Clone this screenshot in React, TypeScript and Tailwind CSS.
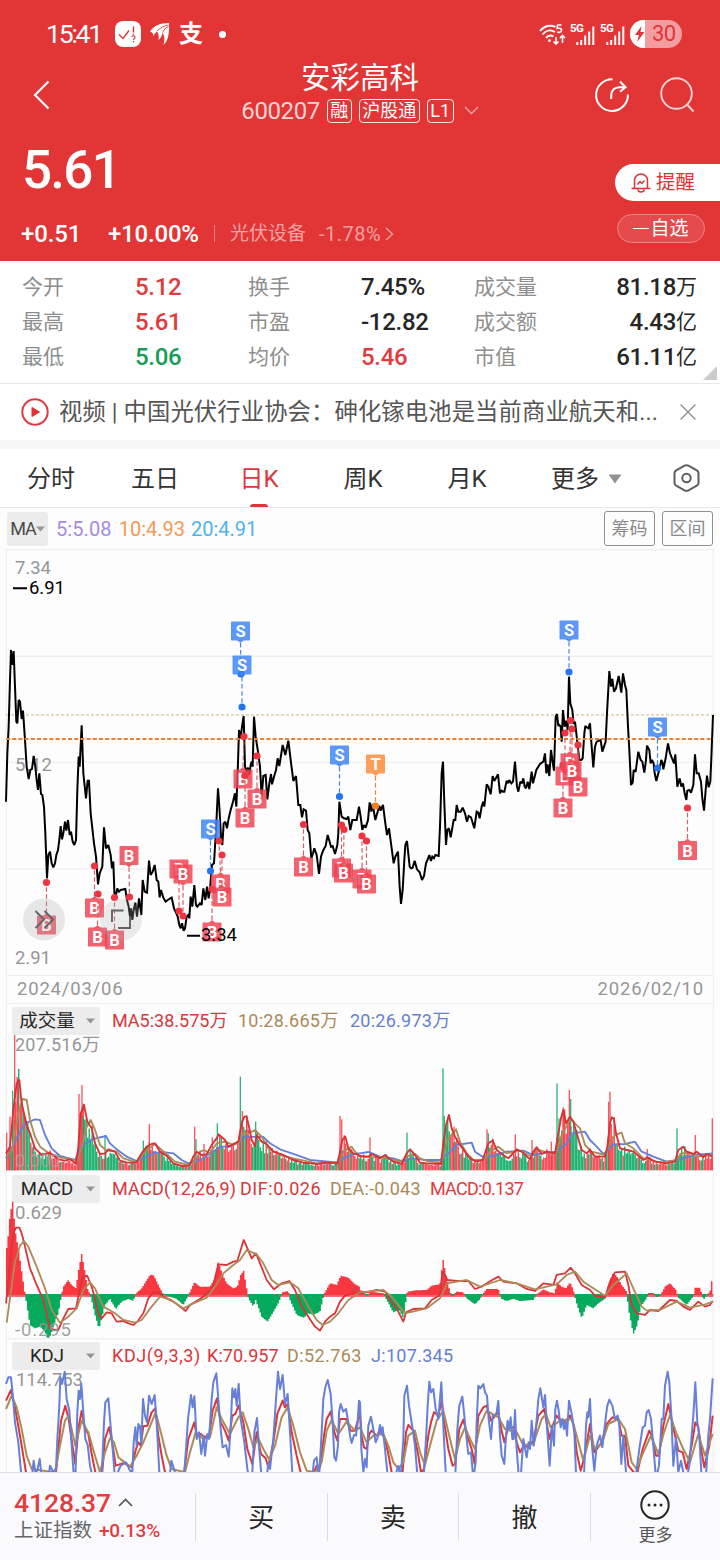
import React from "react";

type Point = [number, number];

// Chart coordinates use three units per CSS pixel, measured from the page origin.
const parse = (text: string, dx: number, dy: number): Point[] =>
  text
    .trim()
    .split(/\s+/)
    .map((pair) => {
      const [x, y] = pair.split(",").map(Number);
      return [x + dx, y + dy] as Point;
    });

const join = (points: Point[]) => points.map((p) => p.join(",")).join(" ");

const sample = (points: Point[], x: number) => {
  for (let i = 1; i < points.length; i++) {
    if (points[i][0] >= x) {
      const [x0, y0] = points[i - 1];
      const [x1, y1] = points[i];
      return y0 + ((y1 - y0) * (x - x0)) / (x1 - x0 || 1);
    }
  }
  return points[points.length - 1][1];
};

const noise = (n: number) => {
  const v = Math.sin(n * 127.1 + 11.7) * 43758.5453;
  return v - Math.floor(v);
};

const price: Point[] = [
  ...parse(
    `18,785 22,640 26,560 30,420 33,330 37,375 41,333 45,440 49,545 52,550 56,480 60,485 65,537 69,512 75,600 80,680 86,717 91,690 96,687 101,648 106,680 110,720 114,750 118,700 123,762 127,765 132,800 136,880 141,1015 145,945 150,935 155,970 160,982 165,970 169,945 174,930 178,900 182,858 186,898 190,880 195,845 199,872 204,840 209,885 213,875 218,905 223,915 228,900 232,750 236,650 239,680 245,556 250,700 258,775 263,722 267,722 272,820 282,910 288,950 294,1033 299,1000 307,980 312,862 318,925 325,915 332,945 336,985 340,965 344,1080 348,1065 352,1045 357,1055 362,1050 376,1047 381,1080 386,1100 390,1130 393,1105 397,1140 401,1110 406,1088 411,1130 417,1075 424,1125 428,1020 434,1055 441,1058 447,962 452,1005 458,995 464,975 470,1020 475,1025 479,1072 483,1050 490,1073 497,1085 503,1080 515,1073 522,1105 528,1118 533,1130 538,1155 542,1165 546,1150 551,1172 555,1165 560,1130 565,1125 568,1135 572,1070 577,1100 583,1035 588,1095 592,1100 600,1090 605,1095 610,1045 616,1080 621,1040 626,1075 630,1050 633,1010 636,975 642,970 648,870 654,745 658,800 663,890 667,915 671,850 676,845 681,865 686,835 692,810 699,785 705,760 709,800 713,700`,
    0,
    1620
  ),
  ...parse(
    `177,390 182,415 186,380 191,348 195,500 200,515 204,503 208,525 212,495 215,485 218,500 222,350 227,410 234,455 240,500 245,590 250,528 257,525 262,598 268,550 273,522 276,553 282,530 288,510 293,475 298,498 308,435 316,465 325,422 332,480 340,543 348,528 355,615 361,615 366,652 371,628 378,632 383,690 388,700 394,775 399,760 403,745 410,765 417,822 423,770 428,755 433,745 437,738 443,705 448,722 453,740 458,738 465,762 472,735 475,700 478,605 485,650 492,655 500,657 505,650 511,690 517,660 530,660 537,620 542,650 547,690 552,675 557,683 564,660 569,607 574,635 578,612 586,660 593,635 598,617 602,632 609,615 616,670 621,705 627,685 633,730 641,790 646,770 654,755 659,860 663,912 668,870 673,780 676,735 681,723 689,800 693,805 698,803 704,782 711,808 719,817 726,840 732,828 738,790 743,778 748,765 753,783 757,770 762,775 766,765 776,768 780,680 785,520`,
    540,
    1800
  ),
  ...parse(
    `9,485 13,610 18,735 22,690 27,685 32,712 41,660 46,660 50,615 55,635 62,635 68,623 75,640 81,665 86,648 93,652 103,685 110,635 115,638 119,655 125,620 130,605 133,620 140,553 145,560 152,583 158,528 163,543 174,523 180,580 185,572 189,575 193,575 200,542 205,550 208,540 214,550 219,545 225,485 231,560 235,575 241,545 246,550 250,535 254,560 258,565 263,545 268,567 275,515 279,550 289,510 300,492 310,485 315,460 319,520 323,493 328,528 333,450 337,480 342,512 347,350 351,342 355,378 358,375 362,380 365,425 369,330 374,380 379,362 383,390 387,230 391,310 397,330 401,372 405,365 409,400 418,480 424,480 428,475 433,400 436,378 440,382 445,385 450,370 455,440 460,502 465,440 470,425 482,420 487,455 493,437 497,425 501,340 508,213 513,260 517,237 522,275 528,265 536,228 544,278 549,220 555,255 559,270 564,380 568,450 573,555 578,548 581,510 587,515 595,455 602,480 607,485 613,518 618,480 621,437 628,450 632,490 636,480 641,490 644,520 649,543 655,520 660,500 664,480 668,490 670,508 677,475 684,430 690,460 698,480 702,490 706,463 712,560 719,535 724,560 729,550 734,580 739,600 742,572 748,570 753,578 760,555 765,463 770,520 776,520 783,545 787,595 792,632 797,570 801,527 806,562 811,545 815,450 819,345`,
    1320,
    1800
  ),
];

const volMa5: Point[] = [
  ...parse(
    `18,460 30,440 40,330 50,250 58,240 65,310 80,375 90,400 105,445 125,465 150,458 175,478 195,482 210,478 228,492 235,440 242,340 252,315 262,365 275,385 285,430 300,462 315,460 325,448 345,455 360,482 380,488 408,488 425,460 440,440 455,432 465,430 480,455 500,468 520,490 545,498 568,497 580,470 590,455 605,465 620,463 635,435 650,415 656,403 675,420 685,440 705,430 715,425 725,370 733,350 740,350 748,385 755,420 765,438 770,405 785,425 800,432 820,455 850,465 880,480 910,488 950,492 975,488 1012,490 1018,465 1027,420 1036,410 1045,445 1060,460 1075,465`,
    0,
    3000
  ),
  ...parse(
    `0,468 25,470 35,462 60,475 75,465 100,485 125,492 140,460 150,448 165,465 180,488 200,490 243,492 250,430 258,375 267,345 275,385 285,410 300,435 315,455 330,475 350,485 368,480 378,450 385,430 398,422 410,450 425,462 445,475 470,448 485,455 510,478 520,455 530,442 545,462 560,455 585,460 595,400 603,355 610,330 618,370 630,350 640,365 650,400 665,450 680,460 690,450 705,470 735,470 742,440 750,370 755,352 762,358 768,400 780,445 800,450 820,455 850,480 862,472 885,485 920,490 945,485 955,450 970,440 980,455 1000,462 1010,455 1030,472 1040,462 1058,470`,
    1080,
    3000
  ),
];

const volMa10: Point[] = [
  ...parse(
    `18,470 35,455 55,340 68,297 80,300 90,360 105,410 120,440 150,462 180,472 215,478 232,485 245,440 260,380 272,360 285,390 300,435 320,452 350,455 370,475 410,487 435,455 465,432 485,450 500,462 525,485 565,495 585,485 600,455 612,450 630,460 650,430 675,425 700,435 715,428 730,400 745,400 765,390 785,410 805,445 840,465 880,475 950,490 1015,487 1030,455 1055,440 1065,455`,
    0,
    3000
  ),
  ...parse(
    `0,470 70,473 120,485 150,465 165,462 180,475 205,485 245,487 262,420 288,388 300,425 320,460 340,480 370,480 390,455 415,440 440,460 480,452 510,468 535,450 565,458 588,460 605,405 632,355 645,370 660,385 675,435 695,455 735,465 750,430 765,405 785,398 795,430 820,445 850,475 900,487 945,482 965,460 990,458 1010,470 1058,465`,
    1080,
    3000
  ),
];

const volMa20: Point[] = [
  ...parse(
    `18,475 35,450 50,415 75,370 105,358 120,360 135,405 155,445 180,468 225,480 245,440 275,418 318,408 330,430 350,448 380,470 410,483 440,470 465,458 495,457 520,460 545,480 565,490 600,480 630,462 660,440 690,440 715,425 735,410 790,411 810,430 840,448 880,462 930,480 1010,487 1040,470 1070,460`,
    0,
    3000
  ),
  ...parse(
    `0,460 25,456 60,470 100,475 130,485 150,475 200,480 240,480 265,460 290,435 335,428 345,455 370,472 410,465 440,455 490,452 520,465 560,458 590,455 620,430 635,400 675,395 690,420 710,440 730,462 745,450 760,433 795,432 825,425 845,455 880,470 920,485 960,478 1000,465 1058,460`,
    1080,
    3000
  ),
];

const RED = "#f93a46";
const GREEN = "#08aa63";

const spikes: [number, number, string][] = [
  [20, 398, RED], [30, 350, RED], [38, 272, GREEN], [44, 105, RED], [54, 240, RED], [237, 282, RED], [246, 255, RED],
  [250, 350, GREEN], [315, 405, GREEN], [430, 422, GREEN], [448, 372, RED], [584, 380, RED], [588, 418, GREEN],
  [612, 432, RED], [637, 412, RED], [652, 370, GREEN], [721, 230, GREEN], [727, 333, RED], [740, 345, RED],
  [767, 365, GREEN], [1020, 348, RED], [1025, 358, RED], [1110, 412, RED], [1221, 398, GREEN], [1329, 205, GREEN],
  [1333, 348, GREEN], [1362, 380, RED], [1461, 388, RED], [1465, 400, GREEN], [1546, 403, RED], [1596, 420, RED],
  [1654, 425, RED], [1671, 250, GREEN], [1677, 355, GREEN], [1690, 322, RED], [1708, 270, RED], [1712, 297, GREEN],
  [1826, 305, RED], [1830, 275, RED], [1942, 447, RED], [2031, 385, GREEN], [2086, 405, RED], [2137, 355, RED],
];

// Stretches of trading days in which falling days dominate.
const greenRuns: Point[] = [
  [68, 92], [100, 150], [250, 295], [318, 350], [470, 560], [755, 790], [870, 950], [1080, 1120], [1150, 1200],
  [1225, 1275], [1333, 1350], [1380, 1410], [1490, 1540], [1560, 1595], [1712, 1755], [1850, 1940], [2010, 2060],
];

const volumeBars = Array.from({ length: 471 }, (_, i) => {
  const x = 20 + i * 4.5;
  const height = (3511 - sample(volMa5, x)) * (0.62 + noise(i) * 0.52);
  const falling = greenRuns.some(([a, b]) => x > a && x < b);
  const color = noise(i + 900) < (falling ? 0.85 : 0.3) ? GREEN : RED;
  return { x, y: 3511 - height, color };
});

const histogram: Point[] = [
  ...parse(
    `18,235 25,180 30,120 38,80 46,170 58,240 68,310 75,357 78,375 90,450 105,460 120,455 135,470 143,492 152,480 165,440 175,415 182,375 185,357 190,335 205,315 215,330 228,340 235,290 245,237 255,290 262,340 270,358 275,375 285,420 297,462 305,430 315,390 330,372 347,402 365,380 385,372 400,378 408,355 425,340 450,300 462,302 475,330 490,358 500,362 530,372 550,390 565,362 570,350 583,322 600,335 630,335 645,310 655,260 668,300 680,325 700,340 712,335 722,300 731,287 740,340 745,370 760,395 767,375 785,425 802,440 815,420 835,385 848,352 865,348 870,375 890,420 912,428 925,415 940,420 960,410 972,358 990,325 1010,330 1022,302 1045,308 1062,325 1078,335`,
    0,
    3525
  ),
  ...parse(
    `0,345 12,350 15,360 22,365 30,350 70,355 80,375 100,412 118,405 130,430 138,375 142,350 165,346 200,345 215,332 240,328 249,252 258,300 270,350 278,366 288,350 310,352 320,370 345,388 360,372 368,358 380,342 415,342 425,372 440,378 460,372 480,378 520,375 528,360 550,343 570,352 585,355 590,320 605,335 618,340 630,322 640,345 648,380 665,430 680,390 700,400 715,385 735,372 742,340 760,292 775,310 785,330 800,350 805,400 820,478 832,450 842,395 860,370 865,354 880,354 890,368 902,360 915,335 930,325 948,345 955,368 980,390 1000,365 1005,338 1020,338 1030,375 1042,360 1050,350 1058,300`,
    1080,
    3525
  ),
];

const ZERO = 3885;
const stepped = (clampTo: (y: number) => number) =>
  `M18 ${ZERO}` +
  Array.from({ length: 471 }, (_, i) => {
    const x = 20 + i * 4.5;
    return `V${clampTo(sample(histogram, x)).toFixed(1)}H${x + 2.3}`;
  }).join("") +
  `V${ZERO}Z`;
const risingArea = stepped((y) => Math.min(y, ZERO));
const fallingArea = stepped((y) => Math.max(y, ZERO));

const dif: Point[] = [
  ...parse(
    `18,385 25,320 32,240 40,175 48,158 58,158 65,175 75,215 90,280 110,330 130,375 143,430 150,460 165,465 175,465 190,430 205,402 228,400 238,350 248,305 262,303 275,335 285,370 295,415 305,430 320,412 335,415 350,440 370,438 385,445 400,450 412,440 430,415 445,370 460,352 475,352 490,365 520,380 540,395 557,408 570,390 600,372 635,345 645,310 655,268 680,270 700,260 712,258 722,225 731,195 740,215 755,250 768,235 778,260 800,315 822,343 845,325 868,318 885,345 905,395 925,425 945,455 960,467 975,440 990,425 1005,415 1020,380 1035,362 1060,355`,
    0,
    3525
  ),
  ...parse(
    `0,355 20,352 50,345 75,350 90,375 110,400 130,440 138,412 160,402 195,400 215,375 240,360 245,310 250,290 262,315 290,318 325,318 345,342 365,335 385,322 415,305 430,320 470,325 500,342 525,348 550,325 580,330 590,300 615,295 632,278 645,295 665,330 690,345 705,362 735,368 750,320 765,292 795,290 805,330 815,390 830,415 855,420 870,405 895,408 930,375 950,378 970,395 990,405 1015,380 1035,395 1050,390 1058,378`,
    1080,
    3525
  ),
];

const dea: Point[] = [
  ...parse(
    `20,443 30,370 45,260 60,212 72,198 85,215 110,275 135,340 155,405 180,443 205,425 230,400 250,345 270,322 285,340 310,395 345,415 370,435 405,443 425,435 455,395 480,365 510,373 550,400 580,385 620,368 645,335 670,295 700,270 720,255 740,225 770,238 790,265 815,315 835,330 870,322 895,340 925,395 950,435 968,450 990,440 1015,415 1045,375`,
    0,
    3525
  ),
  ...parse(
    `0,352 70,345 95,365 135,415 200,400 240,370 262,325 320,315 360,335 420,315 470,325 525,343 590,328 620,300 645,290 670,320 735,362 760,330 800,295 820,340 845,395 860,407 900,405 950,380 990,398 1030,390 1058,380`,
    1080,
    3525
  ),
];

const lineJ: Point[] = [
  ...parse(
    `18,135 25,115 33,115 38,165 45,250 55,310 65,420 95,420 101,365 106,400 112,395 119,360 126,420 145,420 150,380 160,400 168,390 172,300 178,200 181,115 186,135 194,98 200,180 208,215 215,320 222,420 226,420 232,220 236,155 240,180 244,135 250,220 256,300 263,318 270,380 280,420 305,420 312,250 316,190 325,178 330,240 338,330 345,420 362,380 378,370 390,395 397,400 401,310 406,265 410,320 415,255 420,262 424,315 429,180 435,230 441,250 447,170 455,195 464,168 470,250 478,400 485,420 508,420 514,365 525,400 550,440 558,330 564,240 573,168 578,205 583,172 590,300 597,280 604,345 611,290 615,350 622,285 627,300 635,180 640,130 649,103 655,180 662,270 668,325 678,318 686,353 692,270 697,148 702,175 706,150 710,200 716,135 722,240 733,310 742,390 748,420 756,420 763,280 771,237 776,310 783,395 790,430 800,420 805,370 810,390 820,300 828,180 834,98 840,150 848,108 855,195 863,165 870,280 878,420 935,430 942,365 950,355 957,420 965,280 970,180 976,145 983,123 992,165 998,250 1003,355 1008,365 1014,320 1017,220 1022,195 1030,218 1038,210 1044,245 1050,290 1055,312 1062,288 1068,290 1073,250 1077,185`,
    0,
    4020
  ),
  ...parse(
    `0,190 4,330 10,400 15,360 20,385 25,260 33,233 38,260 47,310 53,295 60,258 65,285 68,265 75,330 82,400 100,430 115,380 122,420 130,300 133,170 141,140 147,200 158,270 165,320 173,420 190,430 198,300 203,200 208,128 213,160 220,150 227,210 235,240 244,130 250,260 258,420 285,430 292,270 298,200 307,173 313,230 320,300 325,345 333,340 340,420 347,370 350,250 355,140 361,148 370,135 375,160 381,170 386,240 393,300 398,230 405,230 410,220 415,185 420,290 425,350 433,375 438,290 443,245 448,270 452,235 457,300 461,300 465,213 470,330 477,420 482,420 490,300 500,355 506,310 510,330 515,245 521,320 527,280 535,180 541,148 550,205 555,168 562,280 569,380 576,260 582,320 586,210 591,185 596,215 602,265 607,240 612,270 617,250 621,290 627,185 636,230 643,280 648,400 660,430 672,410 678,260 682,220 685,235 690,180 696,320 703,395 710,320 720,290 727,325 738,230 742,200 748,182 757,200 765,240 773,230 778,260 784,375 790,290 798,400 810,430 825,430 838,330 848,265 855,260 860,220 866,213 873,240 880,320 888,420 897,380 905,240 910,240 915,140 923,98 928,130 934,230 940,380 948,295 955,400 963,365 970,400 978,430 988,380 995,290 1000,230 1006,130 1012,250 1018,290 1025,420 1038,410 1045,290 1050,240 1054,180 1058,118`,
    1080,
    4020
  ),
];

const lineK: Point[] = [
  ...parse(
    `18,185 33,153 45,205 60,290 78,400 90,430 165,430 175,330 183,245 196,200 206,240 216,310 226,375 235,270 245,215 255,270 265,285 275,345 288,410 305,420 315,300 327,265 335,300 347,380 372,372 395,385 408,330 415,310 422,320 430,262 442,260 455,220 466,208 475,290 485,350 495,400 550,420 565,300 583,250 590,290 602,285 615,295 628,285 638,215 651,178 662,250 675,275 686,305 697,230 706,225 716,200 730,250 742,330 757,375 770,280 783,345 797,358 805,385 820,310 832,225 848,185 855,205 863,195 875,280 890,350 902,400 930,430 950,380 960,385 972,290 980,240 992,218 1003,280 1012,305 1020,240 1038,240 1052,275 1065,275 1080,220`,
    0,
    4020
  ),
  ...parse(
    `5,290 12,325 20,330 28,285 35,275 50,290 62,275 75,300 85,345 95,400 125,430 138,280 145,258 160,275 175,350 183,400 192,390 205,290 213,250 222,220 235,230 245,185 255,265 265,330 278,380 285,375 298,270 310,242 325,300 335,330 344,375 355,230 370,205 380,200 393,245 415,220 425,275 433,310 445,265 460,265 470,310 480,340 492,320 505,325 520,305 535,230 553,210 568,300 578,260 590,230 610,255 630,230 642,260 650,340 662,395 672,360 685,285 690,255 703,340 725,310 740,255 757,235 775,240 785,290 795,290 805,380 830,410 848,330 868,275 875,290 888,350 897,350 910,260 925,195 935,240 945,290 955,335 968,340 980,390 995,320 1006,250 1015,265 1025,340 1033,385 1048,320 1058,230`,
    1080,
    4020
  ),
];

const lineD: Point[] = [
  ...parse(
    `18,210 35,170 50,205 65,270 80,350 95,390 130,395 165,400 180,320 195,245 206,230 226,320 245,245 265,280 285,350 300,400 315,340 330,298 342,310 355,355 390,383 410,350 430,310 467,220 480,270 500,350 515,390 555,400 570,340 587,280 610,300 630,295 650,205 665,240 690,285 715,235 728,220 745,270 760,325 775,298 790,330 808,362 825,320 845,235 863,205 880,260 900,340 920,395 945,400 965,370 980,275 995,243 1015,285 1040,248 1065,275`,
    0,
    4020
  ),
  ...parse(
    `0,265 20,310 40,290 70,285 85,320 100,370 115,390 130,370 145,290 165,275 180,340 195,378 210,320 230,245 250,215 270,300 285,360 300,300 315,265 335,310 345,330 360,260 380,215 415,235 435,270 470,280 490,318 520,315 545,240 558,225 572,265 600,245 635,240 650,290 670,365 690,290 705,330 725,315 745,255 775,240 795,270 815,370 830,390 850,340 873,290 895,345 912,280 930,228 950,285 970,330 990,370 1015,285 1035,350 1058,285`,
    1080,
    4020
  ),
];

// kind, box centre x/y, dot x/y in CSS pixels
const markers: ["B" | "S" | "T", number, number, number, number][] = [
  ["B", 46.5, 925, 46.5, 882.5],
  ["B", 94.5, 908, 94.5, 866],
  ["B", 97.5, 937, 98, 894],
  ["B", 114.5, 940, 114.5, 897.5],
  ["B", 129, 855.5, 129.5, 897],
  ["B", 179, 869, 179, 911],
  ["B", 183, 874, 183, 916],
  ["S", 210.5, 829, 210.5, 871],
  ["B", 212, 932, 212, 889],
  ["B", 220.5, 884, 219, 841],
  ["B", 222, 897, 222, 855],
  ["S", 240.5, 631, 241, 674],
  ["S", 242, 665, 242, 707],
  ["B", 243, 779, 244, 736.5],
  ["B", 245, 818, 245, 775.5],
  ["B", 257, 799, 257, 756],
  ["B", 303.5, 867, 303.5, 824.5],
  ["S", 339.5, 755, 339.5, 796.5],
  ["B", 341.5, 868, 341.5, 825],
  ["B", 343.5, 873, 344, 829.5],
  ["B", 362, 879, 362, 836],
  ["B", 366.5, 884, 366.5, 841],
  ["T", 375.5, 764, 375.5, 806],
  ["S", 569, 630, 569, 672],
  ["B", 563, 808, 563, 765],
  ["B", 565, 776, 565, 733],
  ["B", 570, 763, 570.5, 720.5],
  ["B", 572, 771, 572, 729],
  ["B", 578, 787, 578, 745],
  ["S", 657.5, 727, 657.5, 768],
  ["B", 687.5, 850.5, 687.5, 808],
];

const markerColors = {
  B: { box: "#ee4352", dot: "#ee3440", line: "#d2616c" },
  S: { box: "#3d84f5", dot: "#2575ee", line: "#4a88de" },
  T: { box: "#fb8b3a", dot: "#f9801f", line: "#e08840" },
};

function Marker({ m }: { m: (typeof markers)[number] }) {
  const [kind, bx, by, dx, dy] = m;
  const c = markerColors[kind];
  const down = dy > by;
  const tip = down ? by + 12 : by - 12;
  const base = down ? by + 9 : by - 9;
  return (
    <g>
      <line x1={bx} y1={tip} x2={dx} y2={dy} stroke={c.line} strokeWidth="1.2" strokeDasharray="4.5 2.6" />
      <circle cx={dx} cy={dy} r="3.6" fill={c.dot} />
      <rect x={bx - 9.5} y={by - 9.5} width="19" height="19" rx="0.8" fill={c.box} fillOpacity="0.84" />
      <path d={`M${bx - 3.5} ${base} L${bx} ${tip} L${bx + 3.5} ${base}Z`} fill={c.box} fillOpacity="0.85" />
      <text x={bx} y={by + 6} textAnchor="middle" fontSize="16.5" fontWeight="700" fill="#fff">
        {kind}
      </text>
    </g>
  );
}

function MainChart() {
  return (
    <svg className="block h-[426px] w-[720px]" viewBox="0 549 720 426">
      <path d="M6 549.5H713 M6 656.2H713 M6 762.4H713 M6 869H713" stroke="#efeff0" strokeWidth="1.4" />
      <path d="M6.3 549V975 M713.3 549V975" stroke="#efeff0" strokeWidth="1.2" />
      <g fontSize="18.5" fill="#969696">
        <text x="15" y="574" textLength="36">7.34</text>
        <text x="15" y="770.5" textLength="37">5.12</text>
        <text x="15" y="964" textLength="36">2.91</text>
      </g>
      <line x1="6" x2="713" y1="714.9" y2="714.9" stroke="#e4d4b9" strokeWidth="1.6" strokeDasharray="3 2" />
      <polyline
        points={join(price)}
        transform="scale(0.33333)"
        fill="none"
        stroke="#000"
        strokeWidth="6"
        strokeLinejoin="miter"
        strokeMiterlimit="2"
      />
      <line x1="6" x2="713" y1="738.9" y2="738.9" stroke="#ed7f31" strokeWidth="2" strokeDasharray="4 2.2" />
      {markers.map((m, i) => (
        <Marker key={i} m={m} />
      ))}
      <circle cx="44" cy="919.5" r="21" fill="#b4b4b4" fillOpacity="0.3" />
      <circle cx="121" cy="919.5" r="21" fill="#b4b4b4" fillOpacity="0.25" />
      <g fill="none" stroke="#626262" strokeWidth="1.9">
        <path d="M35.5 911l8.500 8.500-8.500 8.500 M44.500 911l8.500 8.500-8.500 8.500" />
        <path d="M123.5 910.5h-11.5v11.5 M118 928h12v-12" />
      </g>
      <g fontSize="18.5" fill="#000">
        <path d="M13 588.3h14 M187 935.8h13" stroke="#000" strokeWidth="2" />
        <text x="29" y="594" textLength="36">6.91</text>
        <text x="201" y="941" textLength="36">3.34</text>
      </g>
    </svg>
  );
}

function VolumeChart() {
  return (
    <svg className="block h-[137px] w-[720px] overflow-visible" viewBox="0 1035 720 137">
      <path d="M6.300 1004V1172 M713.300 1004V1172" stroke="#efeff0" strokeWidth="1.2" />
      <text x="15" y="1050.500" fontSize="18" fill="#969696" textLength="85">207.516万</text>
      <g transform="scale(0.33333)">
        {volumeBars.map((b, i) => (
          <rect key={i} x={b.x - 1.9} y={b.y} width="4.2" height={3511 - b.y} fill={b.color} fillOpacity="0.92" />
        ))}
        {spikes.map(([x, y, color], i) => (
          <rect key={i} x={x - 2} y={3000 + y} width="4" height={511 - y} fill={color} fillOpacity="0.85" />
        ))}
        <g fill="none" strokeWidth="5.6" strokeLinejoin="round">
          <polyline points={join(volMa20)} stroke="#667fd6" />
          <polyline points={join(volMa10)} stroke="#ac8b58" />
          <polyline points={join(volMa5)} stroke="#da3136" />
        </g>
      </g>
      <text x="15" y="1167" fontSize="18" fill="#b0a0a0" fillOpacity="0.75" textLength="45">0.000</text>
    </svg>
  );
}

function MacdChart() {
  return (
    <svg className="block h-[136px] w-[720px] overflow-visible" viewBox="0 1203 720 136">
      <path d="M6 1338.7H713" stroke="#f0f0f0" strokeWidth="1.5" />
      <path d="M6.300 1172V1472 M713.300 1172V1472" stroke="#efeff0" strokeWidth="1.2" />
      <g transform="scale(0.33333)">
        <path d="M18 3884H2140" stroke={GREEN} strokeWidth="4" />
        <path d="M18 3888H2140" stroke={RED} strokeWidth="4" />
        <path d={risingArea} fill="#f93740" />
        <path d={fallingArea} fill="#06aa5c" />
        <g fill="none" strokeWidth="5.4" strokeLinejoin="round">
          <polyline points={join(dif)} stroke="#d93539" />
          <polyline points={join(dea)} stroke="#ac8b58" />
        </g>
      </g>
      <text x="15" y="1218.500" fontSize="18.5" fill="#969696" textLength="47">0.629</text>
      <text x="15" y="1335.500" fontSize="18.5" fill="#969696" fillOpacity="0.9" textLength="56">-0.295</text>
    </svg>
  );
}

function KdjChart() {
  return (
    <svg className="block h-[101px] w-[720px] overflow-visible" viewBox="0 1371 720 101">
      <text x="16" y="1386.500" fontSize="18.5" fill="#969696" textLength="67">114.753</text>
      <g transform="scale(0.33333)" fill="none" strokeWidth="6" strokeLinejoin="round">
        <polyline points={join(lineK)} stroke="#da3539" />
        <polyline points={join(lineD)} stroke="#ac8b58" />
        <polyline points={join(lineJ)} stroke="#667fd9" />
      </g>
    </svg>
  );
}

function IndicatorHeader({ name, items }: { name: string; items: { text: string; style: string }[] }) {
  return (
    <div className="flex h-[31px] items-center pt-[3px] pl-3 text-[18px] leading-none">
      <div className="flex h-[28px] w-[88px] items-center justify-between rounded-[3px] bg-[#ececec] pr-[5px] pl-1">
        <span className="w-[62px] text-center text-[18.5px] text-[#252525]">{name}</span>
        <Caret />
      </div>
      <div className="flex pl-3 whitespace-nowrap">
        {items.map((item) => (
          <span key={item.text} className={item.style}>
            {item.text}
          </span>
        ))}
      </div>
    </div>
  );
}

const Caret = () => (
  <svg className="h-[6px] w-[9px] shrink-0" viewBox="0 0 9 6">
    <path d="M0 .4h9L4.5 5.6z" fill="#969696" />
  </svg>
);

function Signal() {
  return (
    <div className="relative mr-[5px] h-[22px] w-[25px]">
      <span className="absolute top-0 left-0 text-[11.5px] leading-none font-bold tracking-[-0.5px]">5G</span>
      <svg className="h-[22px] w-[25px]" viewBox="0 0 25 22">
        <path d="M7.300 19v3 M11.200 17v5 M15.200 12.500v9.500 M19.200 8.500v13.500 M23.300 3.500v18.500" stroke="#fff" strokeWidth="2" />
      </svg>
    </div>
  );
}

function StatusBar() {
  return (
    <div className="flex h-[58px] items-center pt-[10px] pr-[38px] pl-[46px]">
      <span className="w-[56px] text-[26.5px] leading-none tracking-[-2.2px]">15:41</span>
      <svg className="ml-[13px] h-[26px] w-[26px]" viewBox="0 0 26 26">
        <rect width="26" height="26" rx="8" fill="#fff" />
        <path d="M4 13.5l4 4 6-8 M18.5 5.5v6" fill="none" stroke="#e23536" strokeWidth="1.4" />
        <path d="M17 16c0-2 3.5-1.5 3 .5-.3 1.3-1.5 1.2-1.5 2.5m0 1v1.4" fill="none" stroke="#e23536" strokeWidth="1.1" />
        <path d="M18.5 12.5v1.2" stroke="#e23536" strokeWidth="1.4" />
      </svg>
      <svg className="ml-[9px] h-[22px] w-[20px]" viewBox="0 0 20 22" fill="#fff">
        <path d="M0 9C3 3 10 0 19 0 19.500 11 18 18 13.500 22 15 16 14.500 12 12.500 10 12 13 10.500 15.500 8.500 17 9 13 8.500 10 7 8.500 5 10 4 11.500 3.500 13.500 3.500 11 2.500 9 0 9z" />
        <path d="M7 8C10 5 14 2.800 18.500 2 M12.500 9.500C14 6.500 16 4.500 18.500 3.500" stroke="#e23536" strokeWidth="0.900" fill="none" />
      </svg>
      <span className="ml-[9px] text-[24px] leading-none font-bold">支</span>
      <span className="ml-[16px] h-[7px] w-[7px] rounded-full bg-white" />
      <div className="ml-auto flex items-center">
        <svg className="mr-[4px] h-[22px] w-[27px]" viewBox="0 0 27 22" fill="none" stroke="#fff" strokeWidth="2">
          <path d="M1 8C5 2.500 12 1.500 16.500 4 M3.500 11.500C7 7 12 6.500 16 9 M7 15C9.500 12 12 12 14.500 13.500" />
          <circle cx="10.500" cy="17.700" r="1.400" fill="#fff" stroke="none" />
          <path d="M17 14v7m-2.500-2.500L17 21l2.500-2.500 M23.500 20v-7.500m-2.500 2.500l2.500-2.500 2.500 2.500" strokeWidth="1.600" />
          <path d="M22.500 2h-4l-.3 3.500c3.800-1 4.500.8 4.300 2-.3 2-2.500 2.300-4.300 1.500" strokeWidth="1.600" />
        </svg>
        <Signal />
        <Signal />
        <div className="flex h-[28px] w-[52px] items-center overflow-hidden rounded-full bg-[#f39da0]">
          <div className="flex h-full w-[15px] items-center justify-end bg-white">
            <svg className="h-[16px] w-[11px]" viewBox="0 0 11 16">
              <path d="M7.500 0L1 9h4l-2 7L10.500 6H6.500z" fill="#e23536" />
            </svg>
          </div>
          <span className="pl-[7px] text-[22px] leading-none tracking-[-0.5px] text-[#e23536]">30</span>
        </div>
      </div>
    </div>
  );
}

function Tag({ children }: { children: React.ReactNode }) {
  return (
    <span className="flex h-[24px] items-center rounded-[4px] border border-white/90 px-[2.5px] text-[18px] leading-none">
      {children}
    </span>
  );
}

function Header() {
  return (
    <header className="h-[261px] bg-[#e23536] text-white">
      <StatusBar />
      <div className="flex h-[74px] items-center pr-[24px] pl-[32px]">
        <svg className="h-[30px] w-[18px]" viewBox="0 0 18 30">
          <path d="M16.500 1.500L3 15l13.500 13.500" fill="none" stroke="#fff" strokeWidth="2.200" />
        </svg>
        <div className="flex flex-1 flex-col items-center pb-[3px] pl-[76px]">
          <h1 className="flex h-[34px] items-center text-[29.5px] leading-none">安彩高科</h1>
          <div className="flex h-[30px] items-center gap-[7px]">
            <span className="text-[24px] leading-none tracking-[-0.4px] text-[#fbd3d3]">600207</span>
            <Tag>融</Tag>
            <Tag>沪股通</Tag>
            <Tag>L1</Tag>
            <svg className="ml-[3px] h-[9px] w-[15px]" viewBox="0 0 15 9">
              <path d="M1 1l6.500 6.500L14 1" fill="none" stroke="#f3a6a6" strokeWidth="1.400" />
            </svg>
          </div>
        </div>
        <svg className="h-[36px] w-[36px]" viewBox="0 0 36 36" fill="none" stroke="#fff" strokeWidth="2">
          <path d="M18.500 2.200A15.900 15.900 0 1 0 33.900 17.500" />
          <path d="M17.200 22v-3c0-5.500 3-8.800 8.500-8.800h5 M26 4.500l5.500 5.700-5.500 4.500" />
        </svg>
        <svg className="ml-[30px] h-[36px] w-[36px]" viewBox="0 0 36 36" fill="none" stroke="#fbd5d5" strokeWidth="1.900">
          <circle cx="16.500" cy="16.500" r="15.300" />
          <path d="M27.500 28l6 6.500" />
        </svg>
      </div>
      <div className="mt-[2px] flex h-[72px] justify-between">
        <span className="flex items-center pl-[22px] text-[53px] leading-none font-medium tracking-[-1.8px]">5.61</span>
        <button className="mt-[30px] flex h-[37px] w-[105px] items-center gap-[5px] rounded-l-full bg-white pl-4 text-[19.5px] leading-none text-[#df3437]">
          <svg className="h-[21px] w-[20px]" viewBox="0 0 20 21" fill="none" stroke="#df3437" strokeWidth="1.500">
            <path d="M3.500 16V8.500a6.500 6.500 0 0 1 13 0V16 M.5 16.500h19 M7 17.500a3 2.500 0 0 0 6 0 M6.500 12.500l2.500-3 2 2 2.500-3" />
          </svg>
          提醒
        </button>
      </div>
      <div className="flex h-[55px] items-center pl-[21px] text-[24px] leading-none font-medium">
        <span className="w-[87px] tracking-[-0.1px]">+0.51</span>
        <span className="w-[106px] tracking-[-0.2px]">+10.00%</span>
        <span className="mr-[15px] h-[17px] w-px bg-white/40" />
        <span className="w-[89px] text-[19px] font-normal text-[#f3a3a4]">光伏设备</span>
        <span className="text-[20px] font-normal tracking-[0.5px] text-[#f1a0a1]">-1.78%</span>
        <svg className="ml-1 h-[14px] w-[9px]" viewBox="0 0 9 14">
          <path d="M1 1l6.500 6L1 13" fill="none" stroke="#f1a0a1" strokeWidth="1.400" />
        </svg>
        <button className="mr-[15px] mb-[10px] ml-auto flex h-[29px] w-[88px] items-center justify-center rounded-full border border-[#ee8586] bg-[#e54b4d] text-[19px] leading-none font-normal">
          <span className="mr-px h-[1.6px] w-[16px] bg-white" />
          自选
        </button>
      </div>
    </header>
  );
}

const stats = [
  ["今开", "5.12", "text-[#e23b3d]", "换手", "7.45%", "text-[#262626]", "成交量", "81.18", "万"],
  ["最高", "5.61", "text-[#e23b3d]", "市盈", "-12.82", "text-[#262626]", "成交额", "4.43", "亿"],
  ["最低", "5.06", "text-[#169c58]", "均价", "5.46", "text-[#e23b3d]", "市值", "61.11", "亿"],
];

function Stats() {
  return (
    <section className="relative h-[123px] border-b border-[#e8e8e8] bg-white pt-[8px] pr-[23px] pl-[22px]">
      {stats.map((row) => (
        <div
          key={row[0]}
          className="grid h-[35px] grid-cols-[113px_113px_113px_113px_1fr_auto] items-center text-[24px] leading-none font-medium tracking-[-0.3px] text-[#262626]"
        >
          <span className="pt-px text-[21px] font-normal tracking-normal text-[#8e8e8e]">{row[0]}</span>
          <span className={row[2]}>{row[1]}</span>
          <span className="pt-px text-[21px] font-normal tracking-normal text-[#8e8e8e]">{row[3]}</span>
          <span className={row[5]}>{row[4]}</span>
          <span className="pt-px text-[21px] font-normal tracking-normal text-[#8e8e8e]">{row[6]}</span>
          <span className="flex items-center">
            {row[7]}
            <span className="pt-px text-[21px] font-normal tracking-normal">{row[8]}</span>
          </span>
        </div>
      ))}
      <svg className="absolute right-[3px] bottom-[3px] h-[14px] w-[14px]" viewBox="0 0 14 14">
        <path d="M14 0v14H0z" fill="#cbcbcb" />
      </svg>
    </section>
  );
}

function News() {
  return (
    <section className="flex h-[65px] items-center border-b-[9px] border-[#f7f7f7] bg-white pr-[24px] pl-[21px]">
      <svg className="h-[28px] w-[28px]" viewBox="0 0 28 28">
        <circle cx="14" cy="14" r="12.700" fill="none" stroke="#df3b42" strokeWidth="2" />
        <path d="M11 9.500v9l7.500-4.500z" fill="#e22e35" stroke="#e22e35" />
      </svg>
      <p className="ml-[10px] pt-[2px] text-[23.3px] leading-none tracking-[0.14px] whitespace-nowrap text-[#555]">
        视频 | 中国光伏行业协会：砷化镓电池是当前商业航天和...
      </p>
      <svg className="ml-auto h-[16px] w-[16px]" viewBox="0 0 16 16">
        <path d="M.5.5l15 15 M15.500.5l-15 15" stroke="#8d8d8d" strokeWidth="1.400" />
      </svg>
    </section>
  );
}

function Tabs() {
  return (
    <nav className="flex h-[59px] items-center border-b border-[#e6e6e6] bg-white pr-[20px] text-[24px] leading-none text-[#333]">
      {["分时", "五日", "日K", "周K", "月K"].map((tab) => (
        <div
          key={tab}
          className={
            tab === "日K"
              ? "relative flex h-full w-[104px] items-center justify-center pt-[2px] pr-[2px] text-[#e0353c]"
              : "flex h-full w-[104px] items-center justify-center pt-[2px] pr-[2px]"
          }
        >
          {tab}
          {tab === "日K" && <span className="absolute bottom-0 left-[42px] h-[3px] w-[18px] rounded-t-sm bg-[#dd353d]" />}
        </div>
      ))}
      <div className="flex items-center gap-[9px] pt-[2px] pl-[31px]">
        更多
        <svg className="h-[10px] w-[14px]" viewBox="0 0 14 10">
          <path d="M.5.5h13L7 9.500z" fill="#929292" />
        </svg>
      </div>
      <svg className="ml-auto h-[28px] w-[27px]" viewBox="0 0 27 28" fill="none" stroke="#5d5d5d" strokeWidth="2">
        <path d="M11.500 1.700q2-1 4 0l8.300 4.600q1.700 1 1.700 3v9.400q0 2-1.700 3l-8.300 4.600q-2 1-4 0l-8.300-4.600q-1.700-1-1.700-3V9.300q0-2 1.700-3z" />
        <circle cx="13.500" cy="14" r="4.200" />
      </svg>
    </nav>
  );
}

function MaRow() {
  return (
    <div className="flex h-[41px] items-center pr-[7px] pl-[7px] text-[20px] leading-none">
      <div className="flex h-[34px] w-[41px] items-center justify-center rounded-[3px] bg-[#ececec] text-[18px] tracking-[-1px] text-[#4b4b4b]">
        MA
        <Caret />
      </div>
      <span className="ml-2 pt-px tracking-[0.1px] text-[#a48be3]">5:5.08</span>
      <span className="ml-[7px] pt-px text-[#f29a55]">10:4.93</span>
      <span className="ml-[6px] pt-px text-[#4fb3ec]">20:4.91</span>
      <span className="ml-auto flex h-[35px] w-[51px] items-center justify-center rounded-[3px] border border-[#909090] text-[18px] text-[#8b8b8b]">
        筹码
      </span>
      <span className="ml-[7px] flex h-[35px] w-[51px] items-center justify-center rounded-[3px] border border-[#909090] text-[18px] text-[#8b8b8b]">
        区间
      </span>
    </div>
  );
}

function Footer() {
  return (
    <footer className="relative flex h-[88px] items-center border-t border-[#dedee0] bg-[#fafafc] text-[#272727]">
      <div className="w-[195px] pl-[14px]">
        <div className="flex h-[28px] items-center text-[26.5px] leading-none font-medium tracking-[-0.1px] text-[#e23d3e]">
          4128.37
          <svg className="mb-[3px] ml-[7px] h-[9px] w-[15px]" viewBox="0 0 15 9">
            <path d="M1 8l6.500-6.500L14 8" fill="none" stroke="#555" strokeWidth="1.600" />
          </svg>
        </div>
        <div className="flex h-[26px] items-center text-[19.5px] leading-none text-[#66676c]">
          <span className="w-[85px]">上证指数</span>
          <span className="text-[19px] font-medium tracking-[-0.2px] text-[#e23d3e]">+0.13%</span>
        </div>
      </div>
      {["买", "卖", "撤"].map((action) => (
        <div
          key={action}
          className="flex h-[48px] w-[131.6px] items-center justify-center border-l border-[#dcdcdf] pt-[2px] text-[26px] leading-none"
        >
          {action}
        </div>
      ))}
      <div className="flex h-[48px] flex-1 flex-col items-center justify-center gap-[7px] border-l border-[#dcdcdf] text-[17px] leading-none text-[#555]">
        <svg className="h-[30px] w-[30px] shrink-0" viewBox="0 0 30 30">
          <circle cx="15" cy="15" r="13.700" fill="none" stroke="#262626" strokeWidth="2" />
          <g fill="#262626">
            <circle cx="9" cy="15" r="1.500" />
            <circle cx="15" cy="15" r="1.500" />
            <circle cx="21" cy="15" r="1.500" />
          </g>
        </svg>
        更多
      </div>
    </footer>
  );
}

export default function App() {
  return (
    <div className="flex h-[1560px] w-[720px] flex-col overflow-hidden bg-[#fdfdfd] font-['Roboto','Noto_Sans_CJK_SC',sans-serif]">
      <Header />
      <Stats />
      <News />
      <Tabs />
      <MaRow />
      <main className="flex-1 overflow-hidden">
        <MainChart />
        <div className="mx-[6px] flex h-[29px] items-center justify-between border border-[#efefef] pr-[9px] pl-[10px] text-[18.5px] leading-none tracking-[0.8px] text-[#969696]">
          <span>2024/03/06</span>
          <span>2026/02/10</span>
        </div>
        <IndicatorHeader
          name="成交量"
          items={[
            { text: "MA5:38.575万", style: "w-[126px] text-[#d9363d]" },
            { text: "10:28.665万", style: "w-[112px] tracking-[0.25px] text-[#aa8a59]" },
            { text: "20:26.973万", style: "tracking-[0.25px] text-[#667fd1]" },
          ]}
        />
        <VolumeChart />
        <IndicatorHeader
          name="MACD"
          items={[
            { text: "MACD(12,26,9)", style: "w-[128px] tracking-[0.25px] text-[#d9363d]" },
            { text: "DIF:0.026", style: "w-[90px] tracking-[0.55px] text-[#d9363d]" },
            { text: "DEA:-0.043", style: "w-[100px] tracking-[0.25px] text-[#aa8a59]" },
            { text: "MACD:0.137", style: "tracking-[-0.75px] text-[#e23b43]" },
          ]}
        />
        <MacdChart />
        <IndicatorHeader
          name="KDJ"
          items={[
            { text: "KDJ(9,3,3)", style: "w-[95px] tracking-[0.6px] text-[#d9363d]" },
            { text: "K:70.957", style: "w-[80px] tracking-[0.1px] text-[#d9363d]" },
            { text: "D:52.763", style: "w-[84px] tracking-[0.4px] text-[#aa8a59]" },
            { text: "J:107.345", style: "tracking-[0.3px] text-[#667fd1]" },
          ]}
        />
        <KdjChart />
      </main>
      <Footer />
    </div>
  );
}
